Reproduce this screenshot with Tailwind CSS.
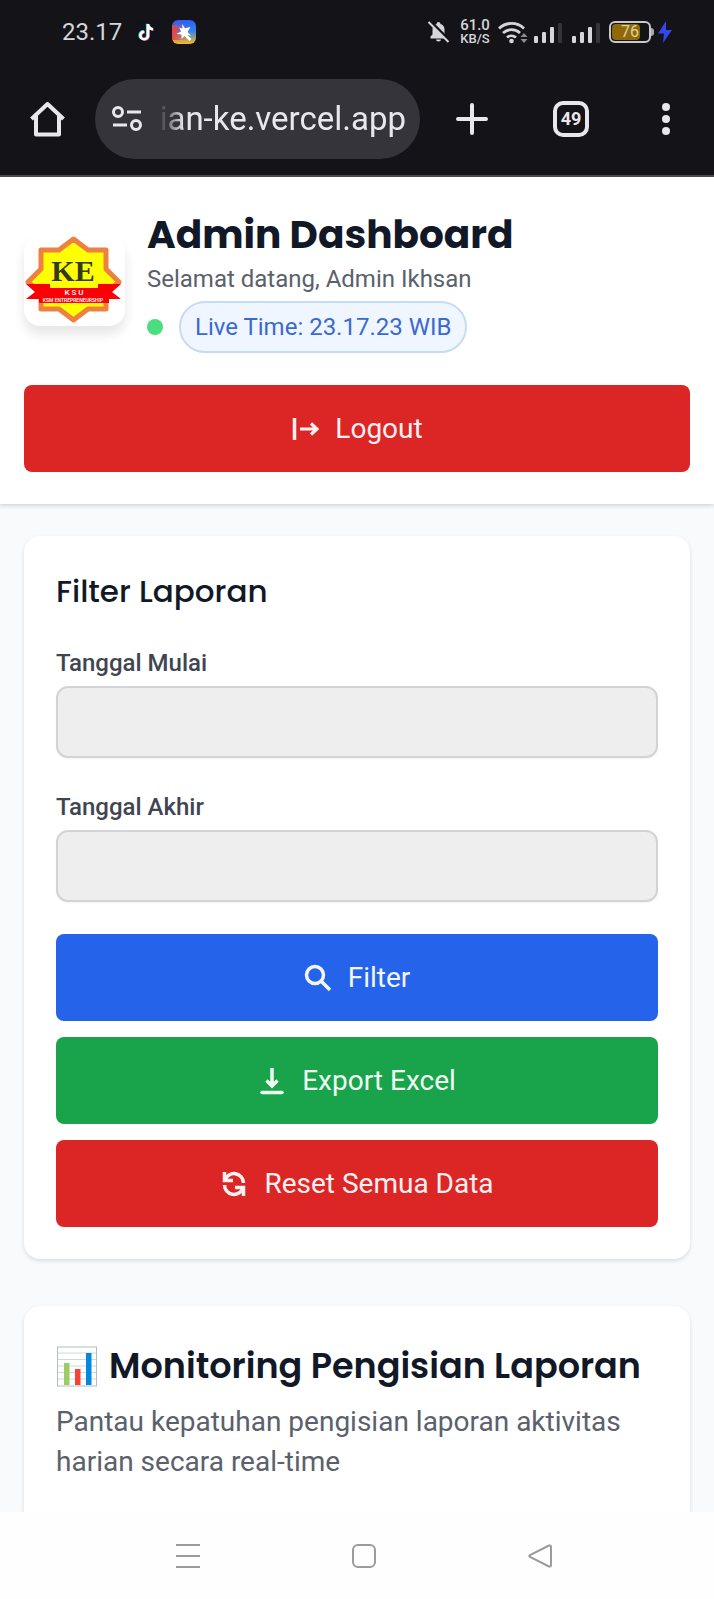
<!DOCTYPE html>
<html lang="id">
<head>
<meta charset="utf-8">
<meta name="viewport" content="width=device-width, initial-scale=1">
<title>Admin Dashboard</title>
<script src="https://cdn.jsdelivr.net/npm/@tailwindcss/browser@4"></script>
</head>
<body class="flex min-h-screen flex-col bg-[#f8fafc] font-['Roboto',sans-serif] text-[#111827]">

<div class="bg-[#141318] text-[#d6d5da]">
  <!-- Status bar -->
  <div class="flex h-16 items-center pl-[62px] pr-[42px]">
    <span class="text-2xl">23.17</span>
    <svg class="ml-[14px] size-6" viewBox="0 0 24 24"><rect width="24" height="24" rx="6" fill="#11131b"/><path d="M12 4v11.500a3.800 3.800 0 1 1-3.800-3.800M12 4.500c.5 3 2 4.500 5 4.700" transform="translate(-.8 -.3)" fill="none" stroke="#25d7d2" stroke-width="2.600"/><path d="M12 4v11.500a3.800 3.800 0 1 1-3.800-3.800M12 4.500c.5 3 2 4.500 5 4.700" transform="translate(.7 .5)" fill="none" stroke="#ef3e5e" stroke-width="2.600"/><path d="M12 4v11.500a3.800 3.800 0 1 1-3.800-3.800M12 4.500c.5 3 2 4.500 5 4.700" fill="none" stroke="#fff" stroke-width="2.600"/></svg>
    <svg class="ml-3 size-6" viewBox="0 0 24 24">
      <defs><linearGradient id="app" x1="0" y1="0" x2="0" y2="1"><stop stop-color="#315bf5"/><stop offset=".45" stop-color="#2f83ee"/><stop offset="1" stop-color="#ffb41f"/></linearGradient><linearGradient id="app2"><stop stop-color="#f2413c"/><stop offset=".6" stop-color="#f2413c" stop-opacity="0"/></linearGradient></defs>
      <rect width="24" height="24" rx="6" fill="url(#app)"/><rect y="5" width="24" height="15" fill="url(#app2)"/>
      <path d="M10 4l3 4.300 5.500-1.300-3 5 3.500 3.500-3.500-.3 4 3.800-2 2-5-5-3 3 0-4.500-5-.5 4.500-2.500-1.700-4 3.200 1z" fill="#fff"/></svg>
    <span class="flex-1"></span>
    <svg class="size-6" viewBox="0 0 24 24"><path d="M5 20v-2l2-2v-5a6 6 0 0 1 4-5.500 2 2 0 0 1 4 0 6 6 0 0 1 4 5.500v5l2 2v2zM10.500 21h5a2.500 2 0 0 1-5 0z" fill="#d6d5da" transform="translate(-1.500 -1.500)"/><path d="M3 1l21 21" stroke="#141318" stroke-width="3"/><path d="M1.500 2l20 20" stroke="#d6d5da" stroke-width="2"/></svg>
    <span class="ml-2 flex w-8 flex-col items-center font-medium"><span class="text-[15px] leading-[14px]">61.0</span><span class="text-[13px] leading-[14px]">KB/S</span></span>
    <svg class="ml-[6px] h-6 w-8" viewBox="0 0 32 24"><g fill="none" stroke="#d6d5da" stroke-width="2.800"><path d="M2 8.500a18 18 0 0 1 25 0"/><path d="M6 13a12.500 12.500 0 0 1 17 0"/><path d="M10 17.500a7 7 0 0 1 9 0"/></g><circle cx="14.500" cy="21" r="2.300" fill="#d6d5da"/><path d="M23.500 17l3.500-4 3.500 4zM23.500 19l3.500 4 3.500-4z" fill="#8d8c91"/></svg>
    <svg class="ml-1 h-6 w-[30px]" viewBox="0 0 30 24"><g fill="#d6d5da"><rect x="1" y="16" width="4" height="7" rx="1"/><rect x="9" y="12" width="4" height="11" rx="1"/><rect x="17" y="7" width="4" height="16" rx="1"/></g><rect x="25" y="3" width="4" height="20" rx="1" fill="#35343a"/></svg>
    <svg class="ml-2 h-6 w-[30px]" viewBox="0 0 30 24"><g fill="#d6d5da"><rect x="1" y="16" width="4" height="7" rx="1"/><rect x="9" y="12" width="4" height="11" rx="1"/><rect x="17" y="7" width="4" height="16" rx="1"/></g><rect x="25" y="3" width="4" height="20" rx="1" fill="#35343a"/></svg>
    <span class="ml-2 flex h-[22px] w-[42px] rounded-md border-2 border-[#c9c8ca] p-px"><span class="flex w-7 items-center justify-center rounded-sm bg-[#8f6906] pl-2 text-base text-[#dfd0a8]">76</span></span>
    <span class="h-2 w-[3px] rounded-r-sm bg-[#a9a8aa]"></span>
    <svg class="ml-1 h-[22px] w-[14px]" viewBox="0 0 14 22"><path d="M8 0L0 12.500h6L5 22l9-13H8z" fill="#3346f0"/></svg>
  </div>
  <!-- Browser toolbar -->
  <div class="flex h-[113px] items-center border-b-2 border-[#4b4a4e] pb-[2px] pl-[29px] pr-11">
    <button type="button" aria-label="Home"><svg class="size-[37px]" viewBox="0 0 37 37"><path d="M7 16v18.500h23V16M2.500 19L18.500 4l16 15" fill="none" stroke="#e8e7ec" stroke-width="4" stroke-linejoin="round"/></svg></button>
    <div class="ml-[29px] flex h-20 min-w-0 flex-1 items-center rounded-full bg-[#35343a] pl-4 pr-[14px]">
      <svg class="h-[26px] w-8 shrink-0" viewBox="0 0 32 26"><g fill="none" stroke="#e8e7ec" stroke-width="3"><circle cx="7" cy="6" r="4.500"/><path d="M16 6h14M2 19h14"/><circle cx="25" cy="19" r="4.500"/></g></svg>
      <div class="ml-4 flex min-w-0 flex-1 justify-end overflow-hidden mask-l-from-90% mask-l-to-100% whitespace-nowrap text-[33px] text-[#e8e7ec]">ian-ke.vercel.app</div>
    </div>
    <button type="button" aria-label="Tab baru" class="ml-9"><svg class="size-8" viewBox="0 0 32 32"><path d="M16 2v28M2 16h28" stroke="#e8e7ec" stroke-width="4" stroke-linecap="round"/></svg></button>
    <button type="button" aria-label="Daftar tab" class="ml-[65px] flex size-9 items-center justify-center rounded-[10px] border-4 border-[#e8e7ec] text-lg font-bold text-[#e8e7ec]">49</button>
    <button type="button" aria-label="Menu" class="ml-[73px] flex flex-col gap-1"><span class="size-2 rounded-full bg-[#e8e7ec]"></span><span class="size-2 rounded-full bg-[#e8e7ec]"></span><span class="size-2 rounded-full bg-[#e8e7ec]"></span></button>
  </div>
</div>

<header class="bg-white px-6 py-8 shadow-[0_2px_4px_rgba(0,0,0,0.15)]">
  <div class="flex items-center gap-[22px]">
    <svg class="h-[90px] w-[101px] rounded-2xl bg-white shadow-[0_8px_12px_rgba(0,0,0,0.1)]" viewBox="0 0 101 90" role="img" aria-label="Logo KSU KE">
      <path d="M49.500 3L64 14h18v19l13 13-13 11v16H64L49.500 84 35 73H17V57L4 46l13-13V14h18z" fill="#ffff00" stroke="#ee8040" stroke-width="5" stroke-linejoin="round"/>
      <text x="49" y="45" text-anchor="middle" font-family="Liberation Serif, serif" font-weight="700" font-size="30" fill="#333a18">KE</text>
      <path d="M2 48h24v4h48v-4h23l-9 8 9 7H85v4H15v-4H2l9-7z" fill="#fb0007"/>
      <text x="50" y="59" text-anchor="middle" font-family="Roboto, sans-serif" font-weight="500" font-size="8" fill="#fff">K S U</text>
      <text x="49" y="66" text-anchor="middle" font-family="Roboto, sans-serif" font-weight="500" font-size="5" fill="#fff">KSM ENTREPRENEURSHIP</text>
    </svg>
    <div class="min-w-0">
      <h1 class="font-['Poppins','Inter',sans-serif] text-[39px] leading-[52px] font-bold">Admin Dashboard</h1>
      <p class="text-2xl leading-9 text-[#5b616c]">Selamat datang, Admin Ikhsan</p>
      <div class="mt-1 flex items-center gap-4">
        <span class="size-4 rounded-full bg-[#4ade80]"></span>
        <span class="flex h-[52px] items-center rounded-full border-2 border-[#c7dcf3] bg-[#eff6ff] px-[14px] text-2xl text-[#3b69cf]">Live Time: 23.17.23 WIB</span>
      </div>
    </div>
  </div>
  <button type="button" class="mt-8 flex h-[87px] w-full items-center justify-center gap-4 rounded-lg bg-[#dc2626] text-[28px] text-[#fff1f1]">
    <svg class="size-7" viewBox="0 0 28 28"><path d="M3.500 3v22" fill="none" stroke="currentColor" stroke-width="3.500"/><path d="M9 14h17M20 8.500l6 5.500-6 5.500" fill="none" stroke="currentColor" stroke-width="3.200"/></svg>Logout</button>
</header>

<main class="flex flex-1 flex-col gap-[47px] px-6 pt-8">
  <section class="rounded-2xl bg-white p-8 shadow-[0_2px_4px_rgba(0,0,0,0.12)]">
    <h2 class="font-['Poppins','Inter',sans-serif] text-[31px] leading-[46px] font-medium">Filter Laporan</h2>
    <form class="mt-8 flex flex-col">
      <label for="mulai" class="text-2xl leading-[34px] font-medium text-[#3f4652]">Tanggal Mulai</label>
      <input id="mulai" type="text" class="mt-[6px] h-[72px] w-full rounded-xl border-2 border-[#d2d3d7] bg-[#eeeeee] px-6 text-2xl shadow-xs">
      <label for="akhir" class="mt-8 text-2xl leading-[34px] font-medium text-[#3f4652]">Tanggal Akhir</label>
      <input id="akhir" type="text" class="mt-[6px] h-[72px] w-full rounded-xl border-2 border-[#d2d3d7] bg-[#eeeeee] px-6 text-2xl shadow-xs">
      <div class="mt-8 flex flex-col gap-4">
        <button type="button" class="flex h-[87px] items-center justify-center gap-4 rounded-lg bg-[#2563eb] text-[28px] text-[#f1f6ff]">
          <svg class="size-7" viewBox="0 0 28 28"><g fill="none" stroke="currentColor" stroke-width="3.500"><circle cx="11" cy="11" r="8.500"/><path d="M17 17l9 9"/></g></svg>Filter</button>
        <button type="button" class="flex h-[87px] items-center justify-center gap-4 rounded-lg bg-[#19a34a] text-[28px] text-[#effff4]">
          <svg class="size-7" viewBox="0 0 28 28"><g fill="none" stroke="currentColor" stroke-width="3.500"><path d="M14 1v18M8.500 13.500l5.500 5.500 5.500-5.500"/><path d="M4 25.500h20" stroke-linecap="round"/></g></svg>Export Excel</button>
        <button type="button" class="flex h-[87px] items-center justify-center gap-4 rounded-lg bg-[#dc2626] text-[28px] text-[#fff1f1]">
          <svg class="size-7" viewBox="0 0 28 28"><g fill="none" stroke="currentColor" stroke-width="3.500"><path d="M4.500 2v8.500H13M5 10a9.500 9.500 0 0 1 18.500 3M23.500 26v-8.500H15M23 18a9.500 9.500 0 0 1-18.500-3"/></g></svg>Reset Semua Data</button>
      </div>
    </form>
  </section>

  <section class="flex-1 rounded-t-2xl bg-white px-8 pt-8 shadow-[0_2px_4px_rgba(0,0,0,0.12)]">
    <h2 class="flex items-center gap-3 font-['Poppins','Inter',sans-serif] text-[35px] leading-[56px] font-semibold whitespace-nowrap">
      <svg class="size-[41px] shrink-0" viewBox="0 0 41 41" aria-hidden="true"><rect x="1.500" y="1" width="39" height="39" fill="#fff" stroke="#b4bcc0"/><path d="M2 7h38M2 13.500h38M2 20h38M2 26.500h38M2 33h38" stroke="#cfd8dc"/><path d="M8 17h5.500v22H8z" fill="#9ccc65"/><path d="M19 23h5.500v16H19z" fill="#f44336"/><path d="M30 7h5.500v32H30z" fill="#0288e1"/></svg>Monitoring Pengisian Laporan</h2>
    <p class="mt-2 text-[28px] leading-[40px] text-[#5b616c]">Pantau kepatuhan pengisian laporan aktivitas harian secara real-time</p>
  </section>
</main>

<!-- System navigation -->
<nav class="flex h-[87px] items-center justify-center gap-[150px] bg-[#fefefe] pl-[13px] text-[#9b9b9b]">
  <button type="button" aria-label="Aplikasi terbaru"><svg class="size-[26px]" viewBox="0 0 26 26"><path d="M1 2h24M1 13h24M1 24h24" stroke="currentColor" stroke-width="2"/></svg></button>
  <button type="button" aria-label="Beranda"><svg class="size-[26px]" viewBox="0 0 26 26"><rect x="2" y="2" width="22" height="22" rx="5" fill="none" stroke="currentColor" stroke-width="2"/></svg></button>
  <button type="button" aria-label="Kembali"><svg class="size-[26px]" viewBox="0 0 26 26"><path d="M22 2.500L3 12q-1.500 1 0 2l19 9.500q2 .5 2-1.500V4q0-2-2-1.500z" fill="none" stroke="currentColor" stroke-width="2"/></svg></button>
</nav>
</body>
</html>
